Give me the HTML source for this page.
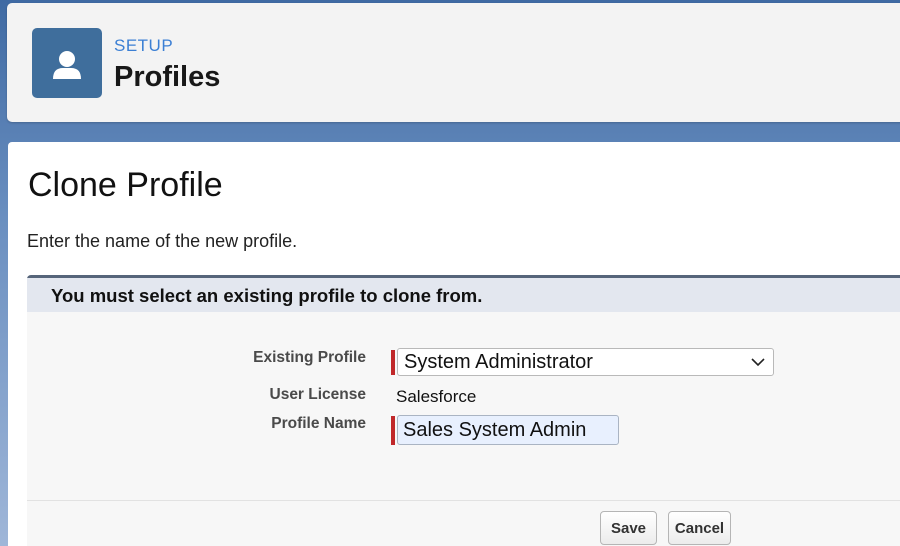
<!DOCTYPE html>
<html><head><style>
*{margin:0;padding:0;box-sizing:border-box}
html,body{width:900px;height:546px;overflow:hidden}
body{background:linear-gradient(180deg,#3f6aa3,#6a8fc0 40%,#9fb6d8);font-family:"Liberation Sans",sans-serif;position:relative}
.hdr{position:absolute;left:7px;top:3px;width:900px;height:119px;background:#f3f3f3;border-radius:5px;box-shadow:0 1px 2px rgba(0,0,0,.2)}
.icon{position:absolute;left:25px;top:25px;width:70px;height:70px;background:#3f6e9c;border-radius:5px}
.setup{position:absolute;left:107px;top:33px;font-size:17px;color:#3b7fd4;letter-spacing:.5px}
.prof{position:absolute;left:107px;top:58px;font-size:29px;font-weight:bold;color:#181818}
.main{position:absolute;left:8px;top:142px;width:900px;height:420px;background:#fff;border-radius:4px}
h1{position:absolute;left:20px;top:24px;font-size:34px;font-weight:normal;color:#111}
.sub{position:absolute;left:19px;top:89px;font-size:18px;color:#222}
.panel{position:absolute;left:19px;top:133px;width:880px;height:290px;background:#f7f7f7;border-top:3px solid #56657a;border-radius:4px 0 0 0}
.ph{height:34px;background:#e3e7ef;font-size:18.5px;font-weight:bold;color:#111;padding:7px 0 0 24px}
.lbl{position:absolute;font-size:15.5px;font-weight:bold;color:#4a4a4a;text-align:right;width:200px}
.bar{position:absolute;left:364px;width:4px;background:#c0282a}
.sel{position:absolute;left:370px;top:70px;width:377px;height:28px;background:#fff;border:1px solid #b9b9b9;border-radius:3px;font-size:20px;padding:2px 6px;color:#111}
.inp{position:absolute;left:370px;top:137px;width:222px;height:30px;background:#e8f0fe;border:1px solid #aab4c3;border-radius:3px;font-size:20px;padding:3px 5px;color:#111}
.div{position:absolute;left:0;top:222px;width:880px;border-top:1px solid #e2e2e2}
.btn{position:absolute;top:233px;height:34px;background:linear-gradient(#fff,#ececec);border:1px solid #b5b5b5;border-radius:4px;font-size:15px;font-weight:bold;color:#333;text-align:center;padding-top:8px}
</style></head><body>
<div class="hdr">
 <div class="icon"><svg width="70" height="70" viewBox="0 0 70 70"><circle cx="35" cy="31" r="8" fill="#fff"/><path d="M21 51 Q21 40 31 40 L39 40 Q49 40 49 51 Z" fill="#fff"/></svg></div>
 <div class="setup">SETUP</div>
 <div class="prof">Profiles</div>
</div>
<div class="main">
 <h1>Clone Profile</h1>
 <div class="sub">Enter the name of the new profile.</div>
 <div class="panel">
  <div class="ph">You must select an existing profile to clone from.</div>
  <div class="lbl" style="left:139px;top:71px">Existing Profile</div>
  <div class="lbl" style="left:139px;top:108px">User License</div>
  <div class="lbl" style="left:139px;top:137px">Profile Name</div>
  <div class="bar" style="top:72px;height:25px"></div>
  <div class="sel">System Administrator<svg style="position:absolute;right:8px;top:9px" width="14" height="9"><path d="M1 1 L7 7 L13 1" stroke="#222" stroke-width="1.6" fill="none"/></svg></div>
  <div style="position:absolute;left:369px;top:109px;font-size:17px;color:#111">Salesforce</div>
  <div class="bar" style="top:138px;height:29px"></div>
  <div class="inp">Sales System Admin</div>
  <div class="div"></div>
  <div class="btn" style="left:573px;width:57px">Save</div>
  <div class="btn" style="left:641px;width:63px">Cancel</div>
 </div>
</div>
</body></html>
